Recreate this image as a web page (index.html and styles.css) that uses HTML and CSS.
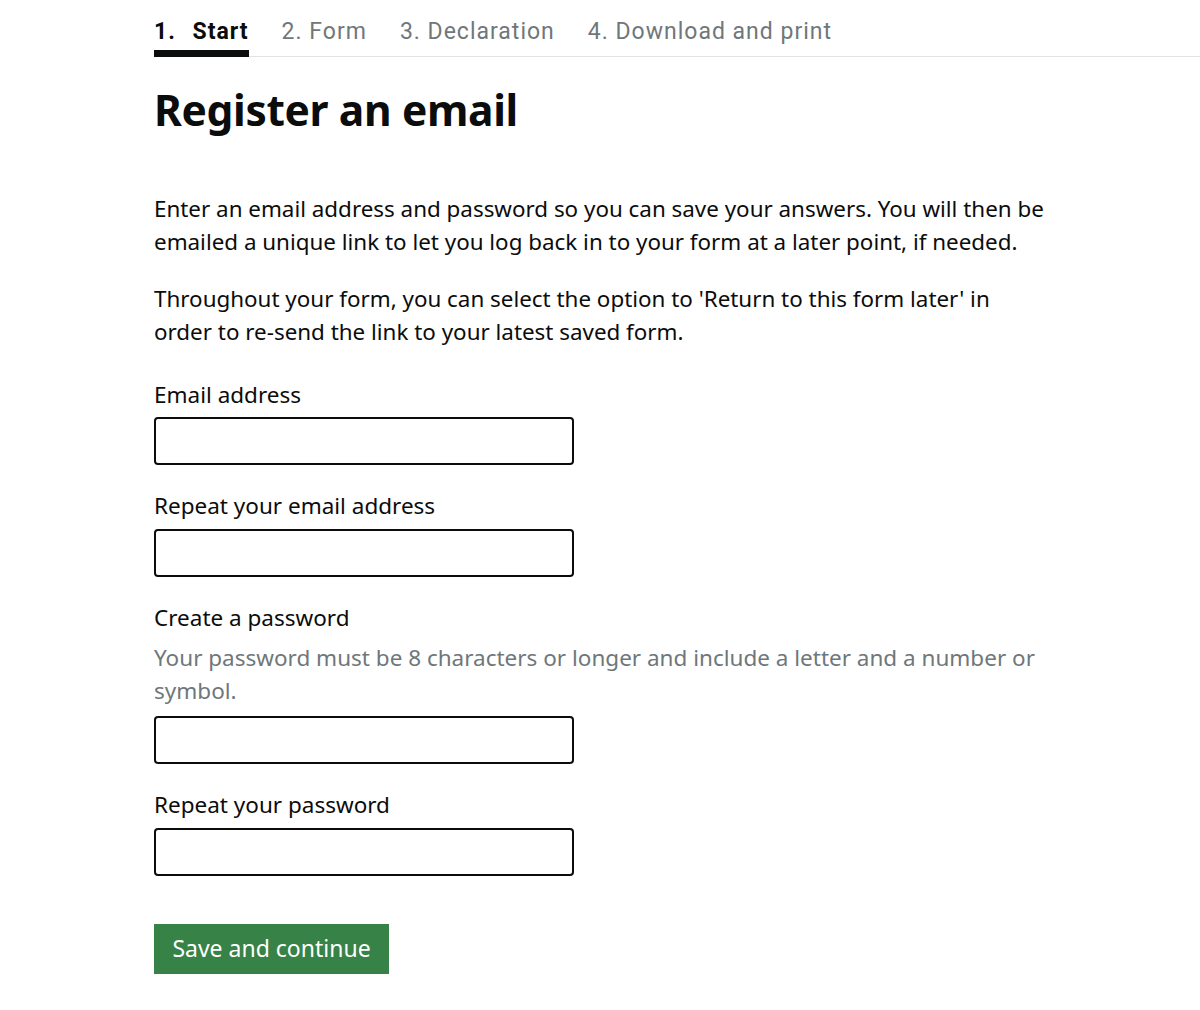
FILE: index.html
```html
<!DOCTYPE html>
<html>
<head>
<meta charset="utf-8">
<link rel="stylesheet" href="styles.css">
</head>
<body>
<nav class="steps">
  <span class="step active">1. Start</span>
  <span class="step">2. Form</span>
  <span class="step">3. Declaration</span>
  <span class="step">4. Download and print</span>
</nav>
<main class="main">
  <h1 class="title">Register an email</h1>
  <div class="intro">
    <p class="body">Enter an email address and password so you can save your answers. You will then be emailed a unique link to let you log back in to your form at a later point, if needed.</p>
    <p class="body">Throughout your form, you can select the option to 'Return to this form later' in order to re-send the link to your latest saved form.</p>
  </div>
  <div class="group">
    <label class="label">Email address</label>
    <input class="input" type="text">
  </div>
  <div class="group">
    <label class="label">Repeat your email address</label>
    <input class="input" type="text">
  </div>
  <div class="group">
    <label class="label">Create a password</label>
    <div class="hint">Your password must be 8 characters or longer and include a letter and a number or symbol.</div>
    <input class="input" type="password">
  </div>
  <div class="group">
    <label class="label">Repeat your password</label>
    <input class="input" type="password">
  </div>
  <button class="button">Save and continue</button>
</main>
</body>
</html>
```
FILE: styles.css
```css
html, body {
  margin: 0;
  padding: 0;
  background: #fff;
  color: #0b0c0c;
  font-family: "Noto Sans", "Liberation Sans", sans-serif;
}
.steps {
  display: flex;
  gap: 33px;
  margin-left: 154px;
  padding-top: 18px;
  border-bottom: 1px solid #e3e3e3;
}
.step {
  font-family: "Roboto", "Liberation Sans", sans-serif;
  font-size: 23px;
  letter-spacing: 1px;
  color: #6f777b;
  line-height: 28px;
  padding-bottom: 10px;
}
.step.active {
  color: #0b0c0c;
  font-weight: 700;
  word-spacing: 10px;
  position: relative;
}
.step.active::after {
  content: "";
  position: absolute;
  left: 0;
  right: 0;
  bottom: -1px;
  height: 7px;
  background: #0b0c0c;
}
.main {
  padding-left: 154px;
}
.title {
  font-size: 42.5px;
  font-weight: 700;
  line-height: 50px;
  margin: 28px 0 57px;
  letter-spacing: -0.35px;
}
.intro {
  width: 895px;
  margin-bottom: 30px;
}
.body {
  font-size: 22.4px;
  line-height: 33px;
  margin: 0 0 24px;
}
.body:last-child {
  margin-bottom: 0;
}
.group {
  margin-bottom: 24px;
}
.label {
  display: block;
  font-size: 22.5px;
  line-height: 33px;
  margin-bottom: 6px;
}
.group + .group .label {
  margin-bottom: 7px;
}
.hint {
  width: 895px;
  font-size: 22.5px;
  line-height: 33px;
  color: #6f777b;
  margin-top: 1px;
  margin-bottom: 9px;
}
.input {
  display: block;
  box-sizing: border-box;
  width: 420px;
  height: 48px;
  border: 2px solid #0b0c0c;
  border-radius: 4px;
  margin: 0;
  padding: 0 8px;
  font-size: 22px;
}
.button {
  display: block;
  box-sizing: border-box;
  white-space: nowrap;
  font-family: inherit;
  background: #378246;
  color: #fff;
  border: none;
  border-radius: 0;
  box-shadow: 0 3px 0 #1b3f22;
  font-size: 23px;
  padding: 0 0 2px;
  width: 235px;
  height: 50px;
  margin-top: 48px;
}
```
